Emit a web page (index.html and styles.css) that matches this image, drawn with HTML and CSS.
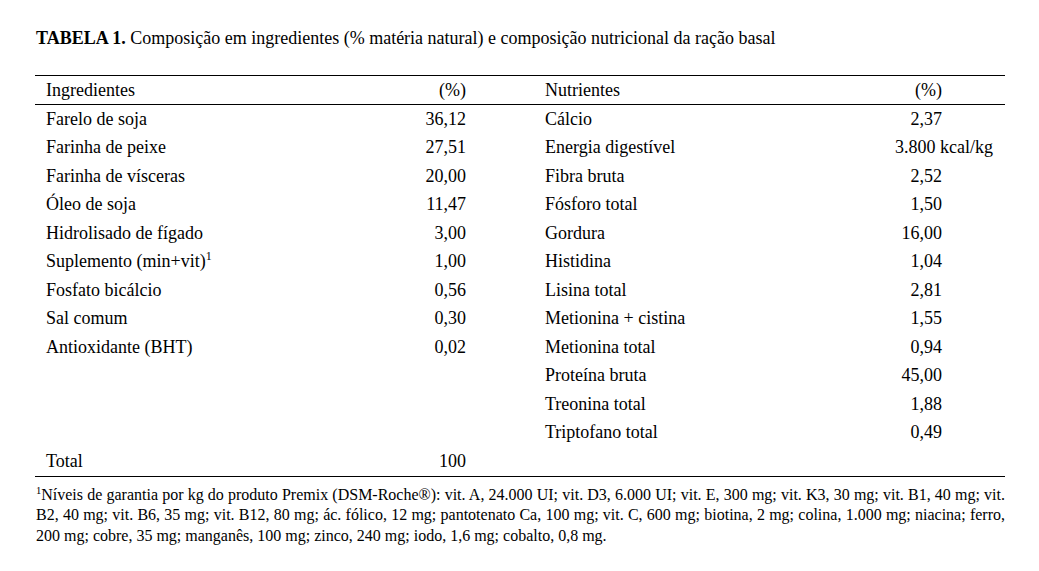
FILE: index.html
```html
<!DOCTYPE html>
<html lang="pt">
<head>
<meta charset="utf-8">
<title>Tabela 1</title>
<link rel="stylesheet" href="styles.css">
</head>
<body>
<main class="page">
  <p class="caption"><b>TABELA 1.</b> Composição em ingredientes (% matéria natural) e composição nutricional da ração basal</p>
  <table class="data">
    <colgroup>
      <col class="c-lab1"><col class="c-val1"><col class="c-lab2"><col class="c-val2"><col class="c-pad">
    </colgroup>
    <thead>
      <tr><th class="lab1">Ingredientes</th><th class="val">(%)</th><th class="lab2">Nutrientes</th><th class="val">(%)</th><th></th></tr>
    </thead>
    <tbody>
      <tr><td class="lab1">Farelo de soja</td><td class="val">36,12</td><td class="lab2">Cálcio</td><td class="val">2,37</td><td></td></tr>
      <tr><td class="lab1">Farinha de peixe</td><td class="val">27,51</td><td class="lab2">Energia digestível</td><td class="val wide">3.800 kcal/kg</td><td></td></tr>
      <tr><td class="lab1">Farinha de vísceras</td><td class="val">20,00</td><td class="lab2">Fibra bruta</td><td class="val">2,52</td><td></td></tr>
      <tr><td class="lab1">Óleo de soja</td><td class="val">11,47</td><td class="lab2">Fósforo total</td><td class="val">1,50</td><td></td></tr>
      <tr><td class="lab1">Hidrolisado de fígado</td><td class="val">3,00</td><td class="lab2">Gordura</td><td class="val">16,00</td><td></td></tr>
      <tr><td class="lab1">Suplemento (min+vit)<sup>1</sup></td><td class="val">1,00</td><td class="lab2">Histidina</td><td class="val">1,04</td><td></td></tr>
      <tr><td class="lab1">Fosfato bicálcio</td><td class="val">0,56</td><td class="lab2">Lisina total</td><td class="val">2,81</td><td></td></tr>
      <tr><td class="lab1">Sal comum</td><td class="val">0,30</td><td class="lab2">Metionina + cistina</td><td class="val">1,55</td><td></td></tr>
      <tr><td class="lab1">Antioxidante (BHT)</td><td class="val">0,02</td><td class="lab2">Metionina total</td><td class="val">0,94</td><td></td></tr>
      <tr><td class="lab1"></td><td class="val"></td><td class="lab2">Proteína bruta</td><td class="val">45,00</td><td></td></tr>
      <tr><td class="lab1"></td><td class="val"></td><td class="lab2">Treonina total</td><td class="val">1,88</td><td></td></tr>
      <tr><td class="lab1"></td><td class="val"></td><td class="lab2">Triptofano total</td><td class="val">0,49</td><td></td></tr>
      <tr class="total"><td class="lab1">Total</td><td class="val">100</td><td class="lab2"></td><td class="val"></td><td></td></tr>
    </tbody>
  </table>
  <p class="note"><sup>1</sup>Níveis de garantia por kg do produto Premix (DSM-Roche®): vit. A, 24.000 UI; vit. D3, 6.000 UI; vit. E, 300 mg; vit. K3, 30 mg; vit. B1, 40 mg; vit. B2, 40 mg; vit. B6, 35 mg; vit. B12, 80 mg; ác. fólico, 12 mg; pantotenato Ca, 100 mg; vit. C, 600 mg; biotina, 2 mg; colina, 1.000 mg; niacina; ferro, 200 mg; cobre, 35 mg; manganês, 100 mg; zinco, 240 mg; iodo, 1,6 mg; cobalto, 0,8 mg.</p>
</main>
</body>
</html>
```
FILE: styles.css
```css
html, body {
  margin: 0;
  padding: 0;
  background: #fff;
}
body {
  font-family: "Liberation Serif", "Times New Roman", serif;
  color: #000;
}
.page {
  width: 970px;
  padding: 28px 0 0 35px;
}
.caption {
  margin: 0 0 0 1px;
  font-size: 18px;
  line-height: 20px;
}
.data {
  margin-top: 27px;
  width: 970px;
  border-collapse: collapse;
  table-layout: fixed;
  font-size: 18px;
  border-top: 1px solid #000;
  border-bottom: 1px solid #000;
}
.c-lab1 { width: 365px; }
.c-val1 { width: 66px; }
.c-lab2 { width: 414px; }
.c-val2 { width: 62px; }
.c-pad { width: 63px; }
.data th, .data td {
  height: 28.5px;
  padding: 0;
  font-weight: normal;
  white-space: nowrap;
  vertical-align: middle;
  text-align: left;
}
.data thead th {
  border-bottom: 1px solid #000;
  height: 28px;
}
.data .lab1 { padding-left: 11px; }
.data .lab2 { padding-left: 79px; }
.data .val { text-align: right; }
.data .val.wide { text-align: left; padding-left: 15px; overflow: visible; }
.data sup {
  font-size: 12px;
  line-height: 0;
  vertical-align: 7px;
}
.note {
  margin: 8px 0 0 1px;
  font-size: 16px;
  line-height: 20.5px;
  text-align: justify;
}
.note sup {
  font-size: 10.5px;
  line-height: 0;
  vertical-align: 6px;
}
```
